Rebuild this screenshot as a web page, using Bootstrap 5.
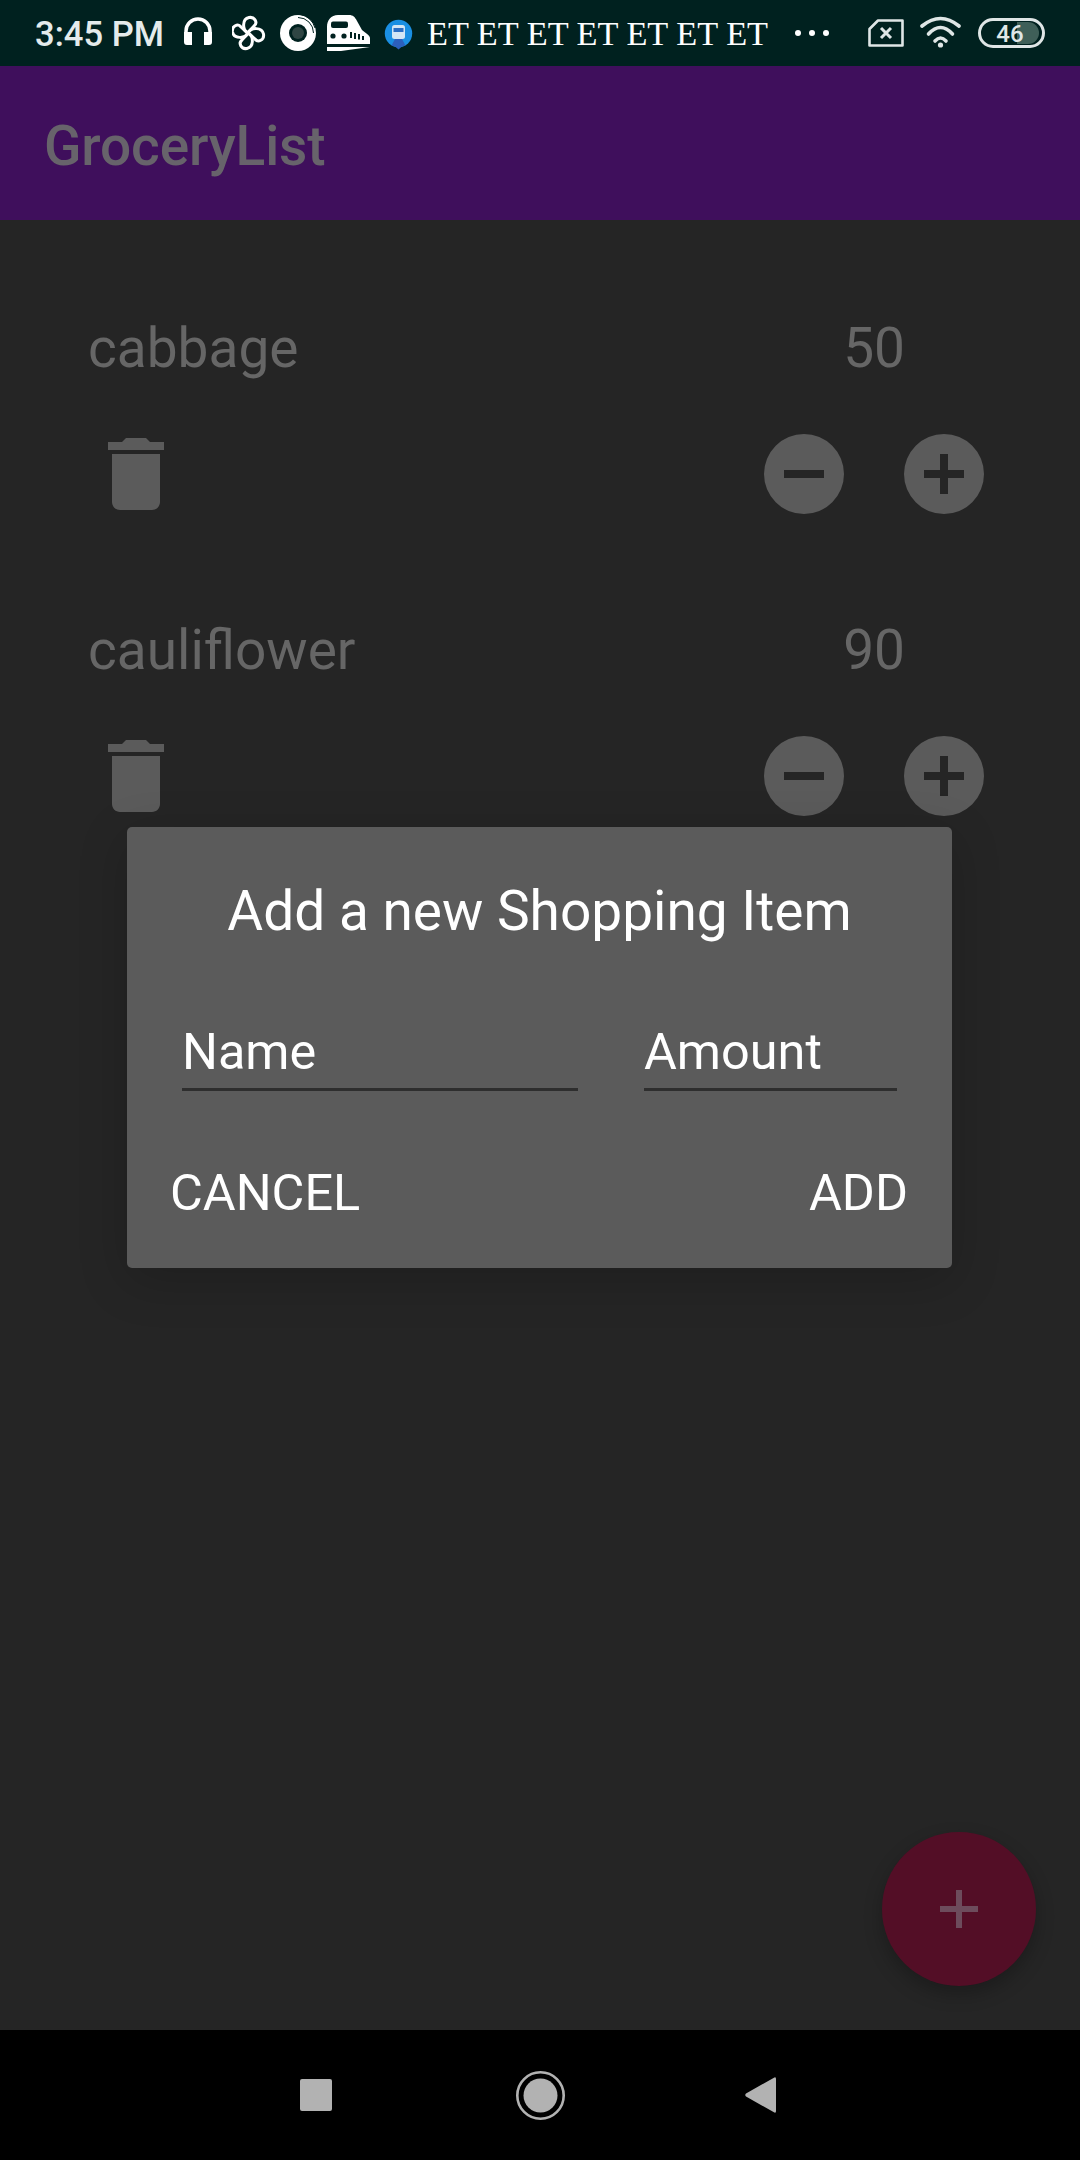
<!DOCTYPE html>
<html lang="en">
<head>
  <meta charset="UTF-8" />
  <meta name="viewport" content="width=device-width, initial-scale=1.0" />
  <title>GroceryList</title>
  <link href="https://cdn.jsdelivr.net/npm/bootstrap@5.3.0/dist/css/bootstrap.min.css" rel="stylesheet">
  <style>
    body {
      background-color: #252525;
      font-family: Roboto, "Liberation Sans", sans-serif;
    }
    .phone {
      position: relative;
      width: 1080px;
      height: 2160px;
      overflow: hidden;
    }
    svg { display: block; flex: none; }

    /* status bar */
    .statusBar {
      height: 66px;
      background-color: #00211f;
      padding-left: 35px;
      color: #e4ebeb;
    }
    .clock { width: 149px; padding-top: 1px; font-size: 34.6px; font-weight: 500; line-height: 66px; white-space: nowrap; }
    .etRow {
      width: 341px;
      font-family: "Liberation Serif", serif;
      font-size: 34.3px;
      line-height: 66px;
      color: #fff;
      white-space: nowrap;
    }

    /* app bar */
    .appBar {
      height: 154px;
      background-color: #3f0f5c;
      padding: 6px 0 0 44px;
    }
    .appTitle {
      padding: 0;
      margin: 0;
      font-size: 55px;
      font-weight: 500;
      line-height: 64px;
      letter-spacing: -.12px;
      color: #67636b;
    }

    /* shopping items */
    .itemList { padding-top: 96px; }
    .shopRow { height: 302px; padding: 0 88px; color: #666; }
    .shopText { font-size: 55px; line-height: 64px; height: 64px; margin-bottom: 46px; }
    .amountCell { margin-right: 87px; }
    .iconBtn { padding: 0; border: 0; background: none; line-height: 0; }
    .iconDim { fill: #5b5b5b; }
    .plusBtn { margin-left: 44px; }

    /* dialog */
    .addDialog {
      position: absolute;
      left: 127px;
      top: 827px;
      width: 825px;
      height: 441px;
      background-color: #5b5b5b;
      border: 0;
      border-radius: 5px;
      box-shadow: 0 12px 50px rgba(0, 0, 0, .18);
      padding-top: 52px;
      color: #fff;
    }
    .dialogTitle { font-size: 55px; font-weight: 400; line-height: 64px; margin: 0; text-align: center; }
    .fieldRow { margin-top: 80px; padding: 0 55px; gap: 66px; }
    .fieldInput {
      height: 68px;
      padding: 0 0 9px 0;
      background: transparent;
      border: 0;
      border-bottom: 3px solid #2e2e2e;
      border-radius: 0;
      font-size: 50.4px;
      line-height: 58px;
      color: #fff;
      box-shadow: none;
    }
    .fieldInput::placeholder { color: #fff; opacity: 1; }
    .nameField { width: 396px; flex: none; }
    .amountField { width: 253px; flex: none; }
    .dialogActions { margin-top: 73px; padding: 0 44px 0 43px; }
    .dialogBtn {
      padding: 0;
      border: 0;
      background: none;
      color: #fff;
      font-size: 50.4px;
      line-height: 58px;
      border-radius: 0;
    }

    /* fab */
    .fabBtn {
      position: absolute;
      left: 882px;
      top: 1832px;
      width: 154px;
      height: 154px;
      padding: 0;
      border: 0;
      background-color: #530e26;
      box-shadow: 0 8px 18px rgba(0, 0, 0, .25);
    }

    /* bottom nav */
    .navKeys { height: 130px; background-color: #000; gap: 172px; }
  </style>
</head>
<body>
  <div class="phone d-flex flex-column">

    <!-- Status bar -->
    <div class="statusBar d-flex align-items-center">
      <span class="clock">3:45 PM</span>
      <!-- headphones -->
      <svg width="48" height="66" viewBox="0 0 48 66">
        <path d="M2 36V31A12 12 0 0 1 26 31V36" fill="none" stroke="#fff" stroke-width="3.5"/>
        <path d="M0 32H8V45H3Q0 45 0 42zM20 32H28V42Q28 45 25 45H20z" fill="#fff"/>
      </svg>
      <!-- pinwheel -->
      <svg width="48" height="66" viewBox="0 0 48 66">
        <g transform="translate(16 33)" fill="none" stroke="#fff" stroke-width="3" stroke-linejoin="round">
          <path id="petal" d="M0 0C-6 -3 -6 -14 1 -15.5C7 -16.5 10 -10 6 -7C4 -5 2 -3 0 0z"/>
          <use href="#petal" transform="rotate(90)"/>
          <use href="#petal" transform="rotate(180)"/>
          <use href="#petal" transform="rotate(270)"/>
        </g>
      </svg>
      <!-- ring -->
      <svg width="47" height="66" viewBox="0 0 47 66">
        <circle cx="18" cy="33" r="18" fill="#fff"/>
        <path d="M18 17.5A15.5 15.5 0 0 1 33.5 33M20 14.5A18 18 0 0 1 35 28" fill="none" stroke="#00211f" stroke-width="1"/>
        <circle cx="18" cy="33" r="9" fill="#00211f"/>
        <circle cx="18" cy="33" r="6" fill="#2f4543"/>
      </svg>
      <!-- train -->
      <svg width="57" height="66" viewBox="0 0 57 66">
        <path d="M11 15H22C26 15 28 17 30 21L35 30C38 33 43 35 43 38V44H0V27C0 20 4 15 11 15z" fill="#fff"/>
        <rect x="4" y="21.5" width="17" height="6.5" rx="2" fill="#00211f"/>
        <circle cx="6" cy="36" r="2.6" fill="#00211f"/>
        <circle cx="17" cy="36" r="2.6" fill="#00211f"/>
        <path d="M24 32V38M28 33V39M32 34V39.5M36 36V40" stroke="#00211f" stroke-width="2"/>
        <path d="M0 47H43L14 51H0z" fill="#fff"/>
      </svg>
      <!-- metro badge -->
      <svg width="43" height="66" viewBox="0 0 43 66">
        <circle cx="14.5" cy="33.5" r="13.7" fill="#1a8fe3"/>
        <path d="M11 46.5H18L14.5 49.5z" fill="#2c5fbd"/>
        <rect x="8" y="25" width="13" height="14" rx="2.5" fill="#d4e6f5"/>
        <rect x="9.5" y="28" width="10" height="4" fill="#2c6ec4"/>
        <path d="M7.5 45.5L11 39H18L21.5 45.5L14.5 47.5z" fill="#2c5fbd"/>
      </svg>
      <span class="etRow">ET ET ET ET ET ET ET</span>
      <!-- overflow dots -->
      <svg width="100" height="66" viewBox="0 0 100 66" fill="#fff">
        <circle cx="30" cy="33" r="3"/><circle cx="44" cy="33" r="3"/><circle cx="58" cy="33" r="3"/>
      </svg>
      <!-- sim -->
      <svg width="52" height="66" viewBox="0 0 52 66" fill="none" stroke="#dfe6e6">
        <path d="M10 20.5H34.5V45.5H1.5V29z" stroke-width="2.6" stroke-linejoin="round"/>
        <path d="M13 28L23 38M23 28L13 38" stroke-width="3"/>
      </svg>
      <!-- wifi -->
      <svg width="58" height="66" viewBox="0 0 58 66" fill="none" stroke="#dfe6e6" stroke-width="3.6" stroke-linecap="round">
        <path d="M2 26Q20.5 11 39 26"/>
        <path d="M8.5 34Q20.5 21 32.5 34"/>
        <path d="M15 41Q20.5 35 26 41"/>
        <circle cx="20.5" cy="45" r="2.6" fill="#dfe6e6" stroke="none"/>
      </svg>
      <!-- battery -->
      <svg width="67" height="66" viewBox="0 0 67 66">
        <path d="M39 22H50A11 11 0 0 1 50 44H39z" fill="#3f5f58"/>
        <rect x="1.5" y="19.5" width="64" height="27" rx="13.5" fill="none" stroke="#dfe6e6" stroke-width="3"/>
        <text x="32" y="42" text-anchor="middle" font-family="Roboto, sans-serif" font-size="24" font-weight="500" fill="#dfe6e6">46</text>
      </svg>
    </div>

    <!-- App bar -->
    <nav class="navbar appBar align-items-center">
      <span class="navbar-brand appTitle">GroceryList</span>
    </nav>

    <!-- Items -->
    <main class="itemList flex-grow-1">
      <div class="shopRow">
        <div class="shopText d-flex justify-content-between">
          <span>cabbage</span>
          <span class="amountCell">50</span>
        </div>
        <div class="d-flex">
          <button class="iconBtn me-auto" type="button" aria-label="Delete">
            <svg class="iconDim" width="96" height="96" viewBox="0 0 24 24"><path d="M6 19c0 1.1.9 2 2 2h8c1.1 0 2-.9 2-2V7H6v12zM19 4h-3.5l-1-1h-5l-1 1H5v2h14V4z"/></svg>
          </button>
          <button class="iconBtn" type="button" aria-label="Decrease">
            <svg class="iconDim" width="96" height="96" viewBox="0 0 24 24"><path d="M12 2a10 10 0 1 0 0 20a10 10 0 0 0 0-20zM17 13H7v-2h10z"/></svg>
          </button>
          <button class="iconBtn plusBtn" type="button" aria-label="Increase">
            <svg class="iconDim" width="96" height="96" viewBox="0 0 24 24"><path d="M12 2a10 10 0 1 0 0 20a10 10 0 0 0 0-20zM17 13h-4v4h-2v-4H7v-2h4V7h2v4h4z"/></svg>
          </button>
        </div>
      </div>

      <div class="shopRow">
        <div class="shopText d-flex justify-content-between">
          <span>cauliflower</span>
          <span class="amountCell">90</span>
        </div>
        <div class="d-flex">
          <button class="iconBtn me-auto" type="button" aria-label="Delete">
            <svg class="iconDim" width="96" height="96" viewBox="0 0 24 24"><path d="M6 19c0 1.1.9 2 2 2h8c1.1 0 2-.9 2-2V7H6v12zM19 4h-3.5l-1-1h-5l-1 1H5v2h14V4z"/></svg>
          </button>
          <button class="iconBtn" type="button" aria-label="Decrease">
            <svg class="iconDim" width="96" height="96" viewBox="0 0 24 24"><path d="M12 2a10 10 0 1 0 0 20a10 10 0 0 0 0-20zM17 13H7v-2h10z"/></svg>
          </button>
          <button class="iconBtn plusBtn" type="button" aria-label="Increase">
            <svg class="iconDim" width="96" height="96" viewBox="0 0 24 24"><path d="M12 2a10 10 0 1 0 0 20a10 10 0 0 0 0-20zM17 13h-4v4h-2v-4H7v-2h4V7h2v4h4z"/></svg>
          </button>
        </div>
      </div>
    </main>

    <!-- Nav keys -->
    <div class="navKeys d-flex justify-content-center align-items-center">
      <svg width="50" height="50" viewBox="0 0 50 50" fill="#b2b2b2">
        <rect x="7" y="9" width="32" height="32" rx="2"/>
      </svg>
      <svg width="50" height="50" viewBox="0 0 50 50">
        <circle cx="25.5" cy="25.5" r="23.2" fill="none" stroke="#b2b2b2" stroke-width="2.6"/>
        <circle cx="25.5" cy="25.5" r="17" fill="#b2b2b2"/>
      </svg>
      <svg width="50" height="50" viewBox="0 0 50 50" fill="#b2b2b2">
        <path d="M39 9V41Q39 44 36.5 42L9 26.5Q7.5 25 9 23.5L36.5 8Q39 6 39 9z"/>
      </svg>
    </div>

    <!-- Add dialog -->
    <div class="card addDialog">
      <h5 class="dialogTitle">Add a new Shopping Item</h5>
      <div class="fieldRow d-flex">
        <input class="form-control fieldInput nameField" type="text" placeholder="Name">
        <input class="form-control fieldInput amountField" type="text" placeholder="Amount">
      </div>
      <div class="dialogActions d-flex justify-content-between">
        <button class="btn dialogBtn" type="button">CANCEL</button>
        <button class="btn dialogBtn" type="button">ADD</button>
      </div>
    </div>

    <!-- Floating add button -->
    <button class="btn fabBtn rounded-circle d-flex align-items-center justify-content-center" type="button" aria-label="Add">
      <svg width="38" height="38" viewBox="0 0 38 38" fill="#6d4c5c">
        <path d="M16 0h6v16h16v6H22v16h-6V22H0v-6h16z"/>
      </svg>
    </button>
  </div>

  <script src="https://cdn.jsdelivr.net/npm/bootstrap@5.3.0/dist/js/bootstrap.bundle.min.js"></script>
</body>
</html>
